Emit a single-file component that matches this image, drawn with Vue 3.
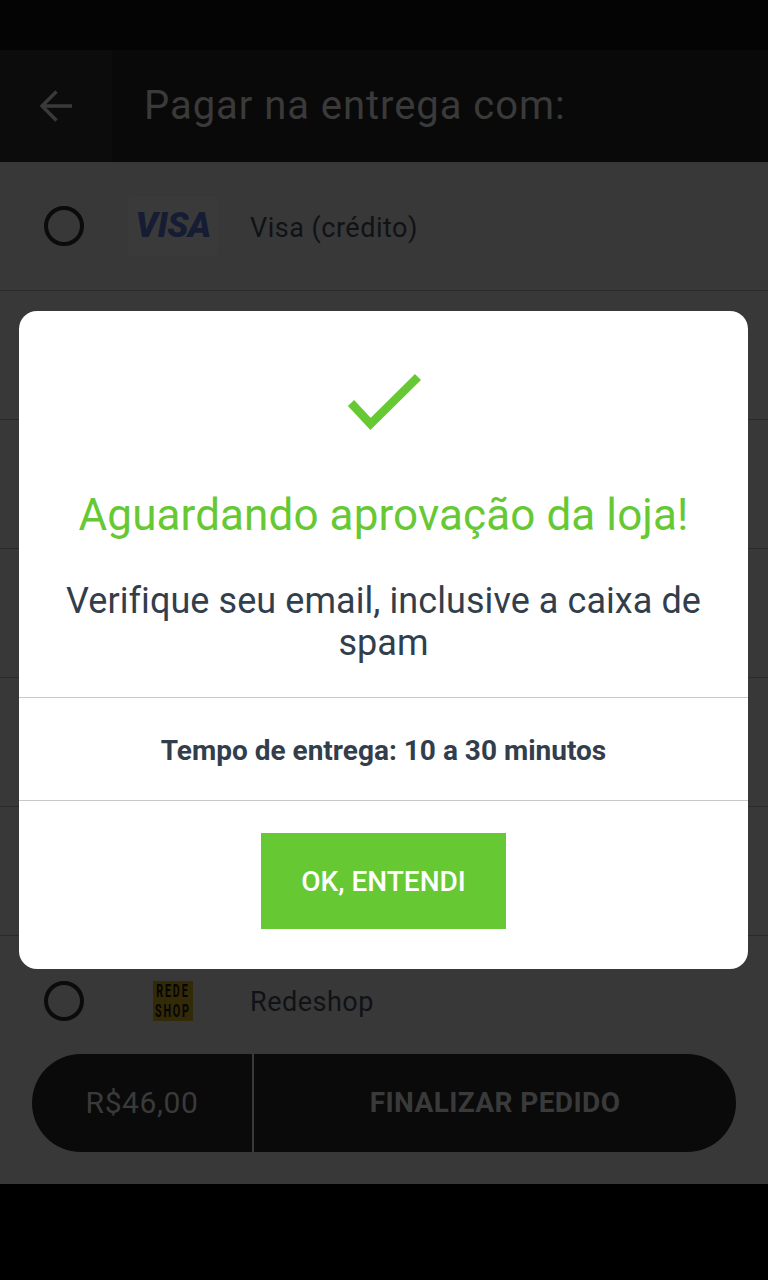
<script setup>
const rows = [
  { id: 1, label: 'Visa (crédito)', logo: 'visa' },
  { id: 2 },
  { id: 3 },
  { id: 4 },
  { id: 5 },
  { id: 6 },
  { id: 7, label: 'Redeshop', logo: 'rede' }
]
</script>

<template>
  <div class="screen">
    <div class="status"></div>
    <header class="head">
      <div class="back">
        <svg width="36" height="36" viewBox="0 0 36 36" fill="none">
          <path d="M34 18H5M18.500 3.500 4 18l14.500 14.500" stroke="#3a3a3a" stroke-width="3.400" />
        </svg>
      </div>
      <h1 class="title">Pagar na entrega com:</h1>
    </header>

    <main class="body">
      <div class="list">
        <div v-for="r in rows" :key="r.id" class="row">
          <template v-if="r.label">
            <span class="radio"></span>
            <span class="logo-slot">
              <span v-if="r.logo === 'visa'" class="visa">VISA</span>
              <span v-else class="rede"><span class="rede-text">REDE<br />SHOP</span></span>
            </span>
            <span class="label">{{ r.label }}</span>
          </template>
        </div>
      </div>
      <div class="pay">
        <div class="price">R$46,00</div>
        <div class="finish">FINALIZAR PEDIDO</div>
      </div>
    </main>

    <div class="nav"></div>

    <section class="modal">
      <svg class="check" width="74" height="60" viewBox="0 0 74 60" fill="none">
        <path d="M4 30 23.500 51 71 4" stroke="#66c934" stroke-width="8.500" />
      </svg>
      <h2 class="heading">Aguardando aprovação da loja!</h2>
      <p class="message">Verifique seu email, inclusive a caixa de spam</p>
      <div class="time">Tempo de entrega: 10 a 30 minutos</div>
      <div class="actions">
        <button class="ok">OK, ENTENDI</button>
      </div>
    </section>
  </div>
</template>

<style>
html, body { margin: 0; background: #000; }
</style>

<style scoped>
.screen {
  position: relative;
  width: 768px;
  height: 1280px;
  overflow: hidden;
  display: flex;
  flex-direction: column;
  background: #000;
  font-family: Roboto, "Liberation Sans", sans-serif;
}
.status { height: 50px; background: #040404; }
.head {
  height: 112px;
  display: flex;
  align-items: center;
  background: #090909;
}
.back {
  width: 112px;
  height: 112px;
  display: flex;
  align-items: center;
  padding-left: 38px;
  box-sizing: border-box;
  background: #0c0c0c;
}
.title {
  margin: 0 0 2px 32px;
  font-size: 40px;
  font-weight: 400;
  letter-spacing: 0.95px;
  color: #3a3a3a;
}
.body {
  position: relative;
  height: 1022px;
  background: #383838;
  overflow: hidden;
}
.row {
  height: 129px;
  box-sizing: border-box;
  border-bottom: 1px solid #2a2a2a;
  display: flex;
  align-items: center;
  padding-left: 44px;
}
.row:last-child { border-bottom: 0; }
.radio {
  width: 40px;
  height: 40px;
  box-sizing: border-box;
  border: 4px solid #0b0b0b;
  border-radius: 50%;
}
.logo-slot {
  width: 90px;
  height: 60px;
  margin: 0 32px 0 44px;
  display: flex;
  align-items: center;
  justify-content: center;
}
.visa {
  width: 90px;
  height: 60px;
  background: #3a3a3a;
  border-radius: 3px;
  font: italic 900 35px/60px Roboto, sans-serif;
  text-align: center;
  color: #151c33;
  letter-spacing: -0.5px;
}
.rede {
  width: 40px;
  height: 40px;
  background: #332a08;
  display: flex;
  align-items: center;
  justify-content: center;
}
.rede-text {
  display: block;
  color: #060603;
  font: 700 18px/20px Roboto, sans-serif;
  letter-spacing: 3px;
  text-align: center;
  white-space: nowrap;
  transform: scaleX(0.6);
}
.label {
  margin-top: 3px;
  font-size: 27px;
  letter-spacing: 0.5px;
  color: #101216;
}
.pay {
  position: absolute;
  left: 32px;
  top: 892px;
  width: 704px;
  height: 98px;
  display: flex;
  border-radius: 49px;
  background: #0a0a0a;
  color: #3a3a3a;
  line-height: 98px;
  text-align: center;
}
.price {
  width: 220px;
  border-right: 2px solid #3a3a3a;
  font-size: 30px;
  letter-spacing: 0.6px;
}
.finish {
  flex: 1;
  font-size: 28px;
  font-weight: 700;
  letter-spacing: 0.4px;
}
.nav { height: 96px; background: #000; }
.modal {
  position: absolute;
  left: 19px;
  top: 311px;
  width: 729px;
  height: 658px;
  box-sizing: border-box;
  background: #fff;
  border-radius: 18px;
  text-align: center;
  display: flex;
  flex-direction: column;
  align-items: center;
}
.check { margin-top: 62px; }
.heading {
  margin: 54px 0 0;
  font-size: 44px;
  line-height: 56px;
  font-weight: 400;
  color: #66c934;
  letter-spacing: 0.1px;
}
.message {
  margin: 37px 0 0;
  width: 660px;
  font-size: 36px;
  line-height: 42px;
  color: #323e4b;
  letter-spacing: 0.07px;
}
.time {
  margin-top: 33px;
  width: 100%;
  height: 104px;
  box-sizing: border-box;
  border-top: 1px solid #c9c9c9;
  border-bottom: 1px solid #c9c9c9;
  font-size: 28px;
  font-weight: 700;
  line-height: 105px;
  color: #323e4b;
}
.actions { padding-top: 32px; }
.ok {
  display: block;
  width: 245px;
  height: 96px;
  border: 0;
  padding: 0;
  background: #66c934;
  color: #fff;
  font: 500 28px Roboto, sans-serif;
}
</style>
